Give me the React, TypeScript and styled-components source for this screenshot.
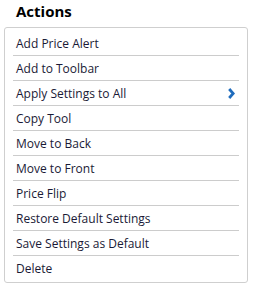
import { createGlobalStyle } from 'styled-components';
import styled from 'styled-components';

const GlobalStyle = createGlobalStyle`
    html, body {
        margin: 0;
        padding: 0;
        background: #ffffff;
        font-family: 'Open Sans', 'Liberation Sans', sans-serif;
    }
`;

const Panel = styled.div`
    width: 254px;
    padding: 1px 6px 0 4px;
    box-sizing: border-box;
`;

const Title = styled.h2`
    margin: 0 0 6px 12px;
    font-size: 15px;
    line-height: 20px;
    font-weight: 700;
    color: #000000;
`;

const Menu = styled.ul`
    list-style: none;
    margin: 0;
    padding: 3px 8px 2px 8px;
    border: 1px solid #cfcfcf;
    border-radius: 3px;
`;

const Item = styled.li<{ last?: boolean }>`
    display: flex;
    align-items: center;
    justify-content: space-between;
    height: 24px;
    padding: 0 4px 0 3px;
    font-size: 12px;
    color: #1a1a36;
    border-bottom: ${(props) => (props.last ? 'none' : '1px solid #cccccc')};
    cursor: pointer;
`;

const Chevron = () => (
    <svg width="7" height="11" viewBox="0 0 7 11">
        <path d="M1.2 1 L5.2 5.5 L1.2 10" fill="none" stroke="#1f6cbd" strokeWidth="2.8" />
    </svg>
);

const actions = [
    'Add Price Alert',
    'Add to Toolbar',
    'Apply Settings to All',
    'Copy Tool',
    'Move to Back',
    'Move to Front',
    'Price Flip',
    'Restore Default Settings',
    'Save Settings as Default',
    'Delete',
];

export default function App() {
    return (
        <>
            <GlobalStyle />
            <Panel>
                <Title>Actions</Title>
                <Menu>
                    {actions.map((label, i) => (
                        <Item key={label} last={i === actions.length - 1}>
                            <span>{label}</span>
                            {label === 'Apply Settings to All' && <Chevron />}
                        </Item>
                    ))}
                </Menu>
            </Panel>
        </>
    );
}
